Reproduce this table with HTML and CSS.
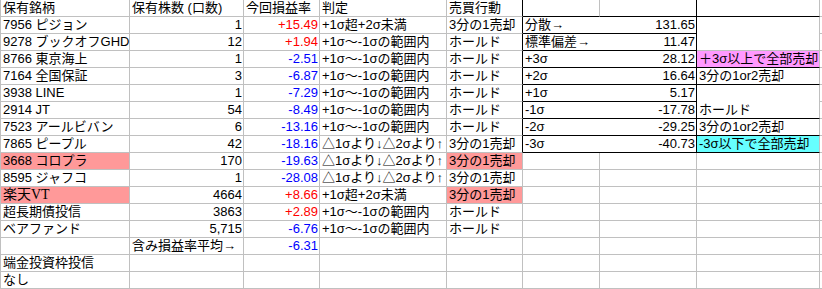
FILE: index.html
```html
<!DOCTYPE html>
<html lang="ja">
<head>
<meta charset="utf-8">
<title>保有銘柄</title>
<link rel="stylesheet" href="styles.css">
</head>
<body>
<div class="sheet">
  <!-- row 0 -->
  <div class="c">保有銘柄</div>
  <div class="c">保有株数 (口数)</div>
  <div class="c">今回損益率</div>
  <div class="c">判定</div>
  <div class="c kr">売買行動</div>
  <div class="c kb"></div>
  <div class="c kb kr"></div>
  <div class="c kb"></div>
  <div class="c last"></div>

  <!-- row 1 -->
  <div class="c">7956 ピジョン</div>
  <div class="c r">1</div>
  <div class="c r pos">+15.49</div>
  <div class="c">+1σ超+2σ未満</div>
  <div class="c kr">3分の1売却</div>
  <div class="c kb kr stat"><span>分散→</span><span>131.65</span></div>
  <div class="c rs2"></div>
  <div class="c last"></div>

  <!-- row 2 -->
  <div class="c">9278 ブックオフGHD</div>
  <div class="c r">12</div>
  <div class="c r pos">+1.94</div>
  <div class="c">+1σ〜-1σの範囲内</div>
  <div class="c kr">ホールド</div>
  <div class="c kb kr stat"><span>標準偏差→</span><span>11.47</span></div>
  <div class="c last"></div>

  <!-- row 3 -->
  <div class="c">8766 東京海上</div>
  <div class="c r">1</div>
  <div class="c r neg">-2.51</div>
  <div class="c">+1σ〜-1σの範囲内</div>
  <div class="c kr">ホールド</div>
  <div class="c kb kr stat"><span>+3σ</span><span>28.12</span></div>
  <div class="c kb mag">＋3σ以上で全部売却</div>
  <div class="c last"></div>

  <!-- row 4 -->
  <div class="c">7164 全国保証</div>
  <div class="c r">3</div>
  <div class="c r neg">-6.87</div>
  <div class="c">+1σ〜-1σの範囲内</div>
  <div class="c kr">ホールド</div>
  <div class="c kb kr stat"><span>+2σ</span><span>16.64</span></div>
  <div class="c kb">3分の1or2売却</div>
  <div class="c last"></div>

  <!-- row 5 -->
  <div class="c">3938 LINE</div>
  <div class="c r">1</div>
  <div class="c r neg">-7.29</div>
  <div class="c">+1σ〜-1σの範囲内</div>
  <div class="c kr">ホールド</div>
  <div class="c kb kr stat"><span>+1σ</span><span>5.17</span></div>
  <div class="c kb rs2">ホールド</div>
  <div class="c last"></div>

  <!-- row 6 -->
  <div class="c">2914 JT</div>
  <div class="c r">54</div>
  <div class="c r neg">-8.49</div>
  <div class="c">+1σ〜-1σの範囲内</div>
  <div class="c kr">ホールド</div>
  <div class="c kb kr stat"><span>-1σ</span><span>-17.78</span></div>
  <div class="c last"></div>

  <!-- row 7 -->
  <div class="c">7523 アールビバン</div>
  <div class="c r">6</div>
  <div class="c r neg">-13.16</div>
  <div class="c">+1σ〜-1σの範囲内</div>
  <div class="c kr">ホールド</div>
  <div class="c kb kr stat"><span>-2σ</span><span>-29.25</span></div>
  <div class="c kb">3分の1or2売却</div>
  <div class="c last"></div>

  <!-- row 8 -->
  <div class="c">7865 ピープル</div>
  <div class="c r">42</div>
  <div class="c r neg">-18.16</div>
  <div class="c">△1σより↓△2σより↑</div>
  <div class="c kr">3分の1売却</div>
  <div class="c kb kr stat"><span>-3σ</span><span>-40.73</span></div>
  <div class="c kb cyan">-3σ以下で全部売却</div>
  <div class="c last"></div>

  <!-- row 9 -->
  <div class="c pink">3668 コロプラ</div>
  <div class="c r">170</div>
  <div class="c r neg">-19.63</div>
  <div class="c">△1σより↓△2σより↑</div>
  <div class="c pink">3分の1売却</div>
  <div class="c"></div>
  <div class="c"></div>
  <div class="c"></div>
  <div class="c last"></div>

  <!-- row 10 -->
  <div class="c">8595 ジャフコ</div>
  <div class="c r">1</div>
  <div class="c r neg">-28.08</div>
  <div class="c">△1σより↓△2σより↑</div>
  <div class="c">3分の1売却</div>
  <div class="c"></div>
  <div class="c"></div>
  <div class="c"></div>
  <div class="c last"></div>

  <!-- row 11 -->
  <div class="c pink serif">楽天VT</div>
  <div class="c r">4664</div>
  <div class="c r pos">+8.66</div>
  <div class="c">+1σ超+2σ未満</div>
  <div class="c pink">3分の1売却</div>
  <div class="c"></div>
  <div class="c"></div>
  <div class="c"></div>
  <div class="c last"></div>

  <!-- row 12 -->
  <div class="c">超長期債投信</div>
  <div class="c r">3863</div>
  <div class="c r pos">+2.89</div>
  <div class="c">+1σ〜-1σの範囲内</div>
  <div class="c">ホールド</div>
  <div class="c"></div>
  <div class="c"></div>
  <div class="c"></div>
  <div class="c last"></div>

  <!-- row 13 -->
  <div class="c">ベアファンド</div>
  <div class="c r">5,715</div>
  <div class="c r neg">-6.76</div>
  <div class="c">+1σ〜-1σの範囲内</div>
  <div class="c">ホールド</div>
  <div class="c"></div>
  <div class="c"></div>
  <div class="c"></div>
  <div class="c last"></div>

  <!-- row 14 -->
  <div class="c"></div>
  <div class="c">含み損益率平均→</div>
  <div class="c r neg">-6.31</div>
  <div class="c"></div>
  <div class="c"></div>
  <div class="c"></div>
  <div class="c"></div>
  <div class="c"></div>
  <div class="c last"></div>

  <!-- row 15 -->
  <div class="c">端金投資枠投信</div>
  <div class="c"></div>
  <div class="c"></div>
  <div class="c"></div>
  <div class="c"></div>
  <div class="c"></div>
  <div class="c"></div>
  <div class="c"></div>
  <div class="c last"></div>

  <!-- row 16 -->
  <div class="c">なし</div>
  <div class="c"></div>
  <div class="c"></div>
  <div class="c"></div>
  <div class="c"></div>
  <div class="c"></div>
  <div class="c"></div>
  <div class="c"></div>
  <div class="c last"></div>
</div>
</body>
</html>
```
FILE: styles.css
```css
html, body {
  margin: 0;
  padding: 0;
  background: #ffffff;
}

body {
  font-family: "Liberation Sans", "Noto Sans CJK JP", sans-serif;
  font-size: 13px;
  color: #000000;
  overflow: hidden;
}

.sheet {
  display: grid;
  grid-template-columns: 129px 114px 76px 127px 76px 77px 97px 123px 1fr;
  grid-auto-rows: 17px;
  border-left: 1px solid #c0c0c0;
  width: 821px;
}

.c {
  box-sizing: border-box;
  border-right: 1px solid #c0c0c0;
  border-bottom: 1px solid #c0c0c0;
  padding: 0 1px 0 2px;
  line-height: 16px;
  white-space: nowrap;
  display: flex;
  align-items: flex-end;
  min-width: 0;
}

.last {
  border-right: none;
}

.r {
  justify-content: flex-end;
}

.pos {
  color: #ff0000;
}

.neg {
  color: #0000ff;
}

.kb {
  border-bottom-color: #000000;
}

.kr {
  border-right-color: #000000;
}

.stat {
  grid-column: span 2;
  justify-content: space-between;
}

.rs2 {
  grid-row: span 2;
}

.pink {
  background: #ff9999;
}

.mag {
  background: #ff99ff;
}

.cyan {
  background: #66ffff;
}

.serif {
  font-family: "Liberation Serif", "Noto Sans CJK JP", serif;
  font-size: 14px;
}
```
